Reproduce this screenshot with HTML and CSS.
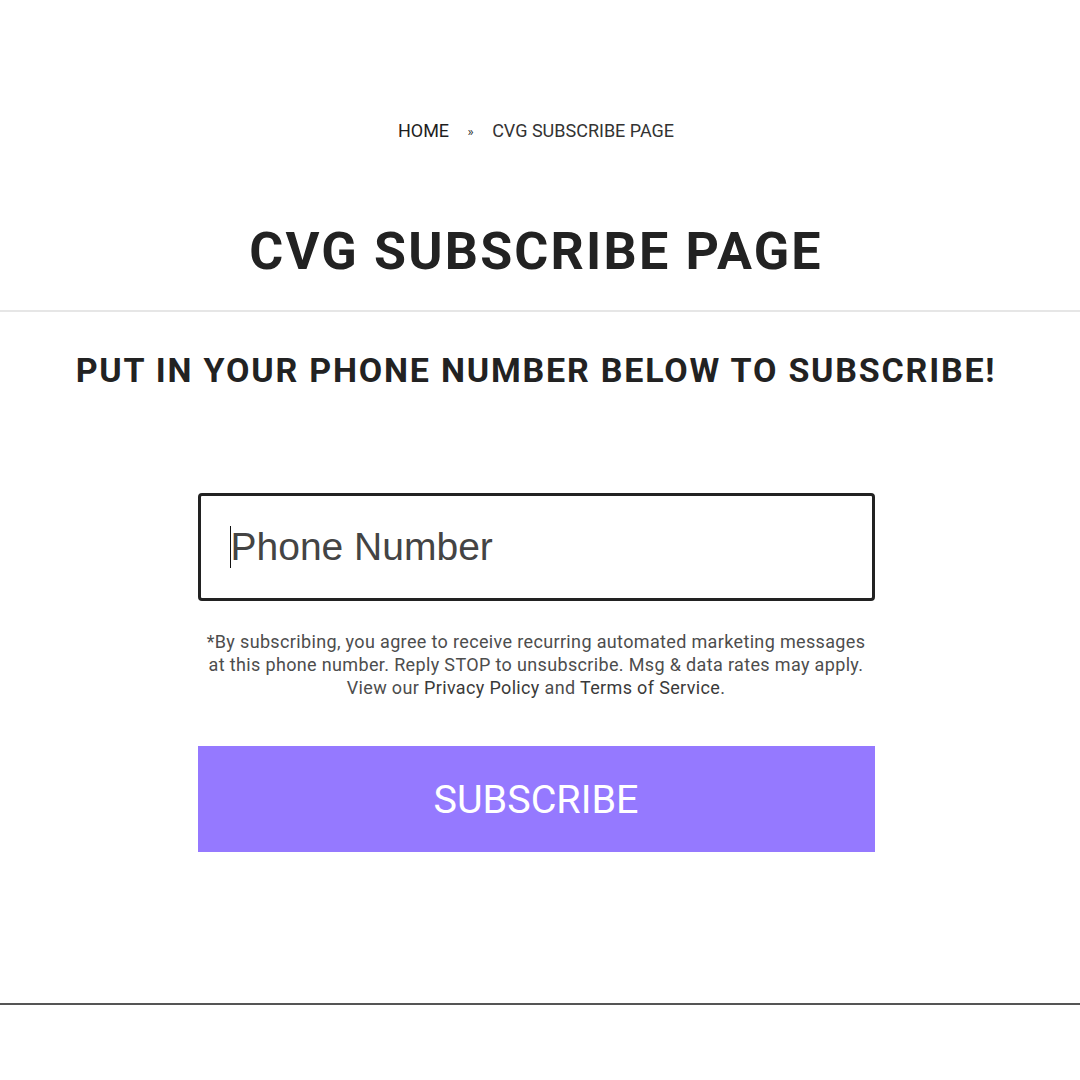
FILE: index.html
```html
<!DOCTYPE html>
<html lang="en">

<head>
    <meta charset="UTF-8">
    <meta name="viewport" content="width=device-width, initial-scale=1.0">
    <title>CVG Subscribe Page</title>

    <link rel="stylesheet" href="styles.css">
</head>

<body>
    <div class="page-header">
        <nav class="breadcrumb">
            <a href="#">HOME</a>
            <span class="sep">&raquo;</span>
            <span>CVG SUBSCRIBE PAGE</span>
        </nav>
        <h1>CVG SUBSCRIBE PAGE</h1>
    </div>

    <div class="content">
        <h2>PUT IN YOUR PHONE NUMBER BELOW TO SUBSCRIBE!</h2>

        <form class="subscribe-form">
            <div class="phone-field">
                <span class="caret"></span>
                <input type="tel" placeholder="Phone Number">
            </div>
            <p class="terms">
                *By subscribing, you agree to receive recurring automated marketing messages<br>
                at this phone number. Reply STOP to unsubscribe. Msg &amp; data rates may apply.<br>
                View our <a href="#">Privacy Policy</a> and <a href="#">Terms of Service</a>.
            </p>
            <button type="submit">SUBSCRIBE</button>
        </form>
    </div>

    <div class="footer-line"></div>
</body>

</html>
```

FILE: styles.css
```css
body {
    font-family: Roboto, "Liberation Sans", sans-serif;
    background-color: #fff;
    color: #222;
    margin: 0;
    padding: 0;
}

.page-header {
    padding: 113px 8px 0 0;
    text-align: center;
    border-bottom: 2px solid #e6e6e6;
    height: 197px;
    box-sizing: content-box;
}

.breadcrumb {
    font-size: 18px;
    color: #333;
    line-height: 36px;
}

.breadcrumb a {
    color: #1e1e1e;
    text-decoration: none;
}

.breadcrumb .sep {
    margin: 0 14px;
    font-size: 13px;
    vertical-align: 1px;
}

h1 {
    margin: 72px 0 0;
    font-size: 52px;
    font-weight: 700;
    letter-spacing: 2.2px;
    line-height: 60px;
}

.content {
    padding-right: 8px;
    text-align: center;
}

h2 {
    margin: 33px 0 0;
    font-size: 34px;
    font-weight: 700;
    letter-spacing: 1.8px;
    line-height: 50px;
}

.subscribe-form {
    width: 677px;
    margin: 98px auto 0;
}

.phone-field {
    position: relative;
    height: 108px;
    border: 3px solid #222;
    border-radius: 4px;
    box-sizing: border-box;
}

.phone-field input {
    width: 100%;
    height: 100%;
    border: none;
    outline: none;
    padding: 0 0 0 30px;
    box-sizing: border-box;
    font-family: "Liberation Sans", Arial, sans-serif;
    font-size: 39px;
    background: transparent;
}

.phone-field input::placeholder {
    color: #444;
}

.caret {
    position: absolute;
    left: 29px;
    top: 30px;
    width: 1px;
    height: 42px;
    background-color: #111;
}

.terms {
    margin: 29px -20px 0;
    font-size: 18px;
    letter-spacing: 0.35px;
    line-height: 23px;
    color: #4d4d4d;
}

.terms a {
    color: #3a3a3a;
    text-decoration: none;
}

.subscribe-form button {
    display: block;
    width: 100%;
    height: 106px;
    margin-top: 47px;
    border: none;
    background-color: #9579ff;
    color: #fff;
    font-family: Roboto, sans-serif;
    font-size: 39.5px;
    cursor: pointer;
}

.footer-line {
    margin-top: 151px;
    border-top: 2px solid #555;
}
```
